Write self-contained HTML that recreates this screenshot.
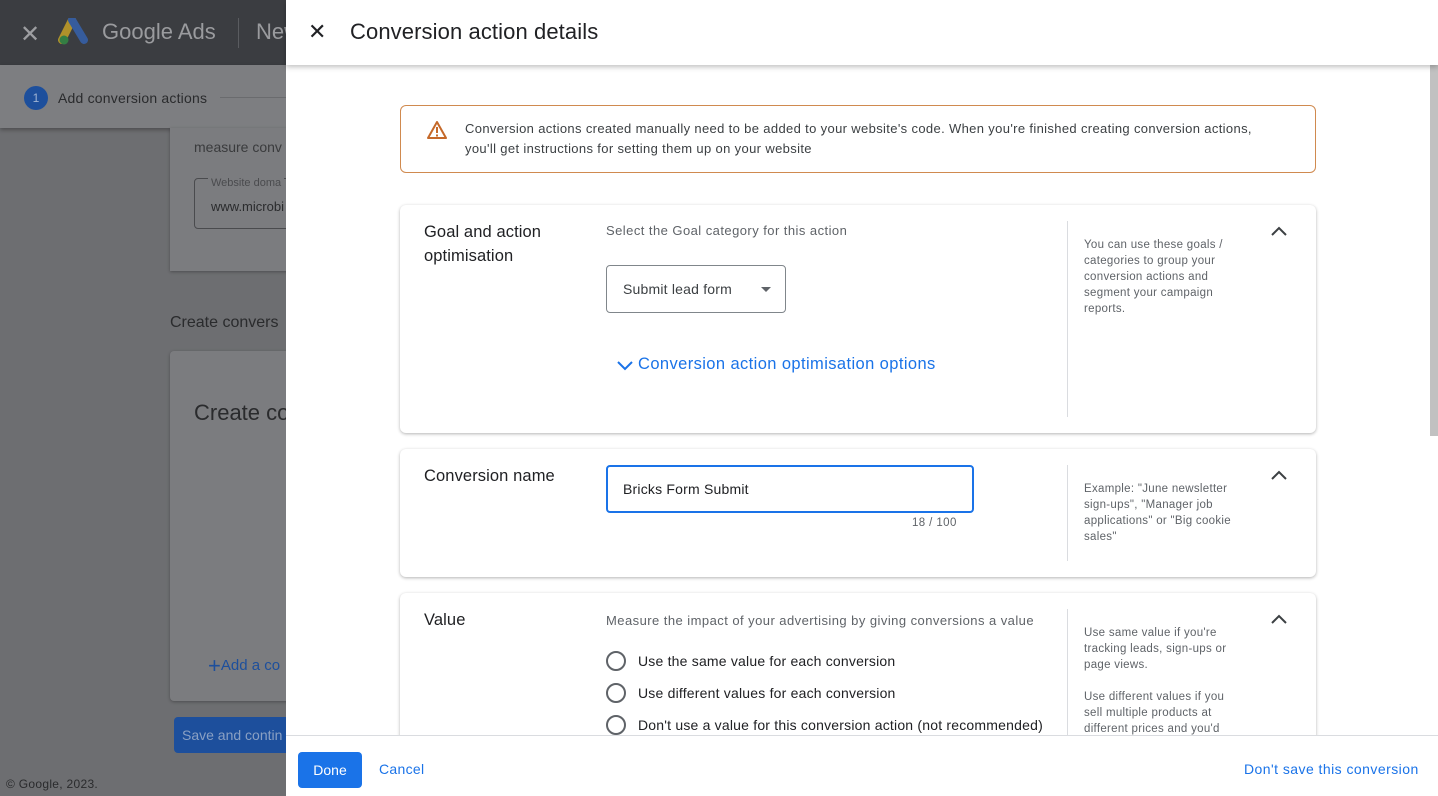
<!DOCTYPE html>
<html><head><style>
*{margin:0;padding:0;box-sizing:border-box}
body{width:1438px;height:796px;overflow:hidden;font-family:"Liberation Sans",sans-serif;position:relative;background:#6d6e71}
.abs{position:absolute}
.topbar{left:0;top:0;width:286px;height:65px;background:#3b3d41}
.stepbar{left:0;top:65px;width:286px;height:63px;background:#7d7e81;box-shadow:0 2px 4px rgba(0,0,0,.3)}
.panel{left:286px;top:0;width:1152px;height:796px;background:#fff}
.hdr{left:0;top:0;width:1152px;height:65px;background:#fff;box-shadow:0 2px 5px rgba(0,0,0,.25);z-index:2}
.card{left:114px;width:916px;background:#fff;border-radius:6px;box-shadow:0 1px 3px rgba(0,0,0,.3)}
.lbl{position:absolute;left:24px;font-size:16.5px;color:#202124;line-height:24px;letter-spacing:.1px}
.sub{position:absolute;left:206px;font-size:13px;color:#5f6368;letter-spacing:.45px}
.div{position:absolute;left:667px;width:1px;background:#dadce0}
.help{position:absolute;left:684px;width:152px;font-size:11.5px;line-height:16px;color:#5f6368;letter-spacing:.3px}
.chev{position:absolute;left:870px}
.radio{position:absolute;left:206px;font-size:14px;color:#202124;display:flex;align-items:center;letter-spacing:.2px}
.radio i{display:inline-block;width:20px;height:20px;border:2px solid #5f6368;border-radius:50%;margin-right:12px}
</style></head><body>
<div class="abs topbar"></div>
<div class="abs" style="left:20px;top:20px;color:#9d9ea1;font-size:24px">✕</div>
<svg class="abs" style="left:58px;top:18px" width="32" height="28" viewBox="0 0 32 28"><path d="M14 2 L4 22" stroke="#b0912a" stroke-width="8" stroke-linecap="round"/><path d="M14 2 L26 22" stroke="#365c9c" stroke-width="8" stroke-linecap="round"/><circle cx="6" cy="22" r="4.5" fill="#347e43"/></svg>
<div class="abs" style="left:102px;top:19px;color:#9a9b9e;font-size:22px">Google Ads</div>
<div class="abs" style="left:238px;top:18px;width:1px;height:30px;background:#5a5c60"></div>
<div class="abs" style="left:256px;top:19px;color:#9a9b9e;font-size:22px">New</div>
<div class="abs stepbar"></div>
<div class="abs" style="left:24px;top:86px;width:24px;height:24px;border-radius:50%;background:#1d4f9c;color:#9fb3d3;font-size:12px;text-align:center;line-height:24px">1</div>
<div class="abs" style="left:58px;top:90px;color:#2a2b2d;font-size:14px;letter-spacing:.2px">Add conversion actions</div>
<div class="abs" style="left:220px;top:97px;width:66px;height:1px;background:#6a6b6e"></div>
<div class="abs" style="left:170px;top:128px;width:130px;height:143px;background:#7b7c7f;box-shadow:0 1px 3px rgba(0,0,0,.3)"></div>
<div class="abs" style="left:194px;top:139px;color:#3a3b3d;font-size:14px">measure conv</div>
<div class="abs" style="left:194px;top:178px;width:100px;height:51px;border:1px solid #4a4b4e;border-radius:4px"></div>
<div class="abs" style="left:208px;top:177px;color:#4a4b4e;font-size:11px;background:#7b7c7f;padding:0 3px">Website doma</div>
<div class="abs" style="left:211px;top:199px;color:#2a2b2d;font-size:13px">www.microbi</div>
<div class="abs" style="left:170px;top:314px;color:#2a2b2d;font-size:16px">Create convers</div>
<div class="abs" style="left:170px;top:351px;width:130px;height:350px;background:#7b7c7f;border-radius:4px;box-shadow:0 1px 3px rgba(0,0,0,.3)"></div>
<div class="abs" style="left:194px;top:400px;color:#2a2b2d;font-size:22px">Create co</div>
<div class="abs" style="left:208px;top:653px;color:#1d4f9c;font-size:15px"><span style="font-size:22px;vertical-align:-3px">+</span>Add a co</div>
<div class="abs" style="left:174px;top:717px;width:120px;height:36px;background:#1d4f9c;border-radius:4px;color:#8aa0c3;font-size:14px;padding:10px 8px">Save and contin</div>
<div class="abs" style="left:6px;top:777px;color:#2a2b2d;font-size:12px;letter-spacing:.3px">© Google, 2023.</div>

<div class="abs panel">
 <div class="abs hdr">
  <div class="abs" style="left:22px;top:20px;font-size:22px;color:#202124;line-height:24px">✕</div>
  <div class="abs" style="left:64px;top:19px;font-size:22px;color:#202124;letter-spacing:.1px">Conversion action details</div>
 </div>
 <div class="abs" style="left:1144px;top:65px;width:8px;height:371px;background:#c1c1c1"></div>
 <div class="abs" style="left:114px;top:105px;width:916px;height:68px;border:1px solid #d08a4f;border-radius:6px">
  <svg class="abs" style="left:25px;top:14px" width="22" height="20" viewBox="0 0 22 20"><path d="M11 2 L20 18 L2 18 Z" fill="none" stroke="#c5692a" stroke-width="2" stroke-linejoin="round"/><rect x="10" y="7" width="2" height="6" fill="#c5692a"/><rect x="10" y="14.5" width="2" height="2" fill="#c5692a"/></svg>
  <div class="abs" style="left:64px;top:13px;font-size:13px;color:#3c4043;line-height:20px;width:815px;letter-spacing:.35px">Conversion actions created manually need to be added to your website's code. When you're finished creating conversion actions, you'll get instructions for setting them up on your website</div>
 </div>
 <div class="abs card" style="top:205px;height:228px">
  <div class="lbl" style="top:15px">Goal and action<br>optimisation</div>
  <div class="sub" style="top:18px">Select the Goal category for this action</div>
  <div class="abs" style="left:206px;top:60px;width:180px;height:48px;border:1px solid #80868b;border-radius:4px;font-size:14px;color:#3c4043;padding:15px 16px;letter-spacing:.2px">Submit lead form<span class="abs" style="left:154px;top:21px;border:5px solid transparent;border-top-color:#5f6368"></span></div>
  <svg class="abs" style="left:216px;top:153px" width="18" height="14"><path d="M2 4 L9 11 L16 4" fill="none" stroke="#1a73e8" stroke-width="2"/></svg>
  <div class="abs" style="left:238px;top:150px;font-size:16.5px;color:#1a73e8;letter-spacing:.4px">Conversion action optimisation options</div>
  <div class="div" style="top:16px;height:196px"></div>
  <div class="help" style="top:32px">You can use these goals / categories to group your conversion actions and segment your campaign reports.</div>
  <svg class="chev" style="top:20px" width="18" height="12"><path d="M2 10 L9 3 L16 10" fill="none" stroke="#3c4043" stroke-width="2"/></svg>
 </div>
 <div class="abs card" style="top:449px;height:128px">
  <div class="lbl" style="top:15px">Conversion name</div>
  <div class="abs" style="left:206px;top:16px;width:368px;height:48px;border:2px solid #1a73e8;border-radius:4px;font-size:14px;color:#202124;padding:14px 15px;letter-spacing:.2px">Bricks Form Submit</div>
  <div class="abs" style="left:512px;top:68px;font-size:11.5px;color:#5f6368;letter-spacing:.4px">18 / 100</div>
  <div class="div" style="top:16px;height:96px"></div>
  <div class="help" style="top:32px">Example: "June newsletter sign-ups", "Manager job applications" or "Big cookie sales"</div>
  <svg class="chev" style="top:20px" width="18" height="12"><path d="M2 10 L9 3 L16 10" fill="none" stroke="#3c4043" stroke-width="2"/></svg>
 </div>
 <div class="abs card" style="top:593px;height:160px">
  <div class="lbl" style="top:15px">Value</div>
  <div class="sub" style="top:20px">Measure the impact of your advertising by giving conversions a value</div>
  <div class="radio" style="top:58px"><i></i>Use the same value for each conversion</div>
  <div class="radio" style="top:90px"><i></i>Use different values for each conversion</div>
  <div class="radio" style="top:122px"><i></i>Don't use a value for this conversion action (not recommended)</div>
  <div class="div" style="top:16px;height:140px"></div>
  <div class="help" style="top:32px">Use same value if you're tracking leads, sign-ups or page views.<br><br>Use different values if you sell multiple products at different prices and you'd</div>
  <svg class="chev" style="top:20px" width="18" height="12"><path d="M2 10 L9 3 L16 10" fill="none" stroke="#3c4043" stroke-width="2"/></svg>
 </div>
 <div class="abs" style="left:0;top:735px;width:1152px;height:61px;background:#fff;border-top:1px solid #dadce0">
  <div class="abs" style="left:12px;top:16px;width:64px;height:36px;background:#1a73e8;border-radius:4px;color:#fff;font-size:14px;text-align:center;line-height:36px">Done</div>
  <div class="abs" style="left:93px;top:25px;color:#1a73e8;font-size:14px;letter-spacing:.3px">Cancel</div>
  <div class="abs" style="left:958px;top:25px;color:#1a73e8;font-size:14px;letter-spacing:.45px">Don't save this conversion</div>
 </div>
</div>
</body></html>
